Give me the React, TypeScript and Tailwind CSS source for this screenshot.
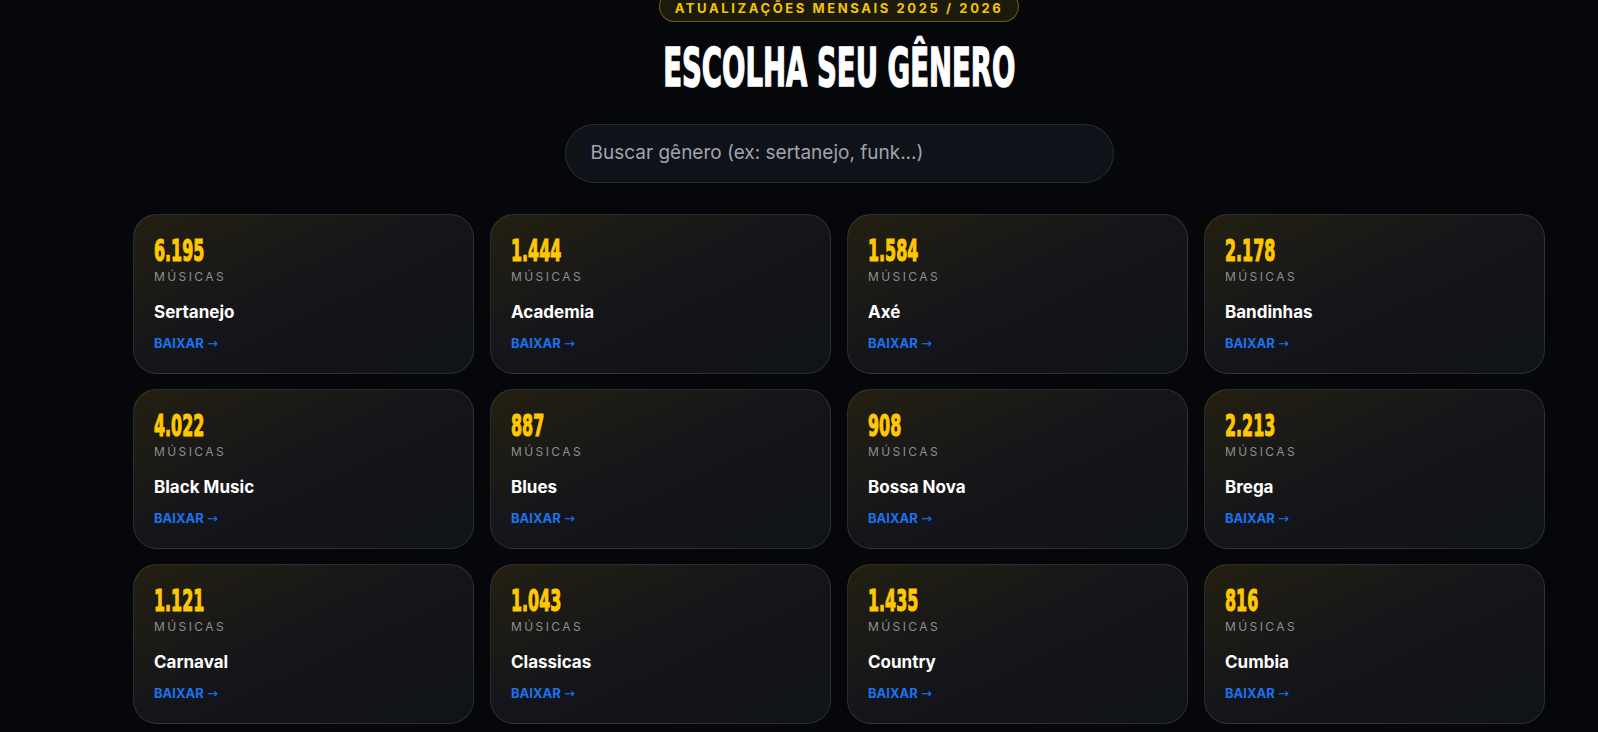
const genres = [
  { count: '6.195', name: 'Sertanejo' },
  { count: '1.444', name: 'Academia' },
  { count: '1.584', name: 'Axé' },
  { count: '2.178', name: 'Bandinhas' },
  { count: '4.022', name: 'Black Music' },
  { count: '887', name: 'Blues' },
  { count: '908', name: 'Bossa Nova' },
  { count: '2.213', name: 'Brega' },
  { count: '1.121', name: 'Carnaval' },
  { count: '1.043', name: 'Classicas' },
  { count: '1.435', name: 'Country' },
  { count: '816', name: 'Cumbia' },
];

// fonte condensada "fake": DejaVu Bold comprimida na horizontal
const display = { fontFamily: '"DejaVu Sans", sans-serif' };

export default function App() {
  return (
    <div
      className="h-[732px] overflow-hidden bg-[#06070b] pl-[80px] text-white"
      style={{ fontFamily: 'Inter, "Noto Sans", sans-serif' }}
    >
      <div className="flex flex-col items-center">
        {/* Selo de atualização (cortado pelo scroll) */}
        <div className="-mt-[9px] rounded-full border border-[#f5c400]/40 bg-[#1c1a0c] px-[15px] pt-[8px] pb-[5px]">
          <span className="block text-[13px] font-bold uppercase leading-[16px] tracking-[0.2em] text-[#f5c400]">
            Atualizações Mensais 2025 / 2026
          </span>
        </div>

        <h1
          className="mt-[18px] inline-block scale-x-[0.51] text-[54px] font-bold uppercase leading-[55px] whitespace-nowrap text-white [-webkit-text-stroke:1.6px_white]"
          style={display}
        >
          Escolha seu Gênero
        </h1>

        <div className="mt-[29px] flex h-[59px] w-[549px] items-center rounded-full border border-white/10 bg-[#0f1218] px-[25px]">
          <input
            className="w-full bg-transparent text-[19px] text-white outline-none placeholder:text-[#a0a4ad]"
            placeholder="Buscar gênero (ex: sertanejo, funk...)"
          />
        </div>

        <div className="mt-[31px] grid w-full max-w-[1412px] grid-cols-4 gap-x-4 gap-y-[15px]">
          {genres.map((g) => (
            <div
              key={g.name}
              className="h-[160px] rounded-[24px] border border-white/10 bg-gradient-to-br from-[#231f10] via-[#14151a] to-[#101318] px-[20px] pt-[21px]"
            >
              <div
                className="origin-left scale-x-[0.53] text-[30px] font-bold leading-[30px] whitespace-nowrap text-[#ffc800] [-webkit-text-stroke:1.2px_#ffc800]"
                style={display}
              >
                {g.count}
              </div>
              <div className="mt-[4px] text-[12px] uppercase leading-[14px] tracking-[0.2em] text-[#8b8f98]">
                Músicas
              </div>
              <div className="mt-[18px] text-[17px] font-bold leading-[20px] text-white">{g.name}</div>
              <div className="mt-[13px] text-[13px] font-bold leading-[16px] text-[#1a73f0]">
                BAIXAR{' '}
                <span className="font-normal" style={{ fontFamily: '"DejaVu Sans", sans-serif' }}>
                  →
                </span>
              </div>
            </div>
          ))}
        </div>
      </div>
    </div>
  );
}
